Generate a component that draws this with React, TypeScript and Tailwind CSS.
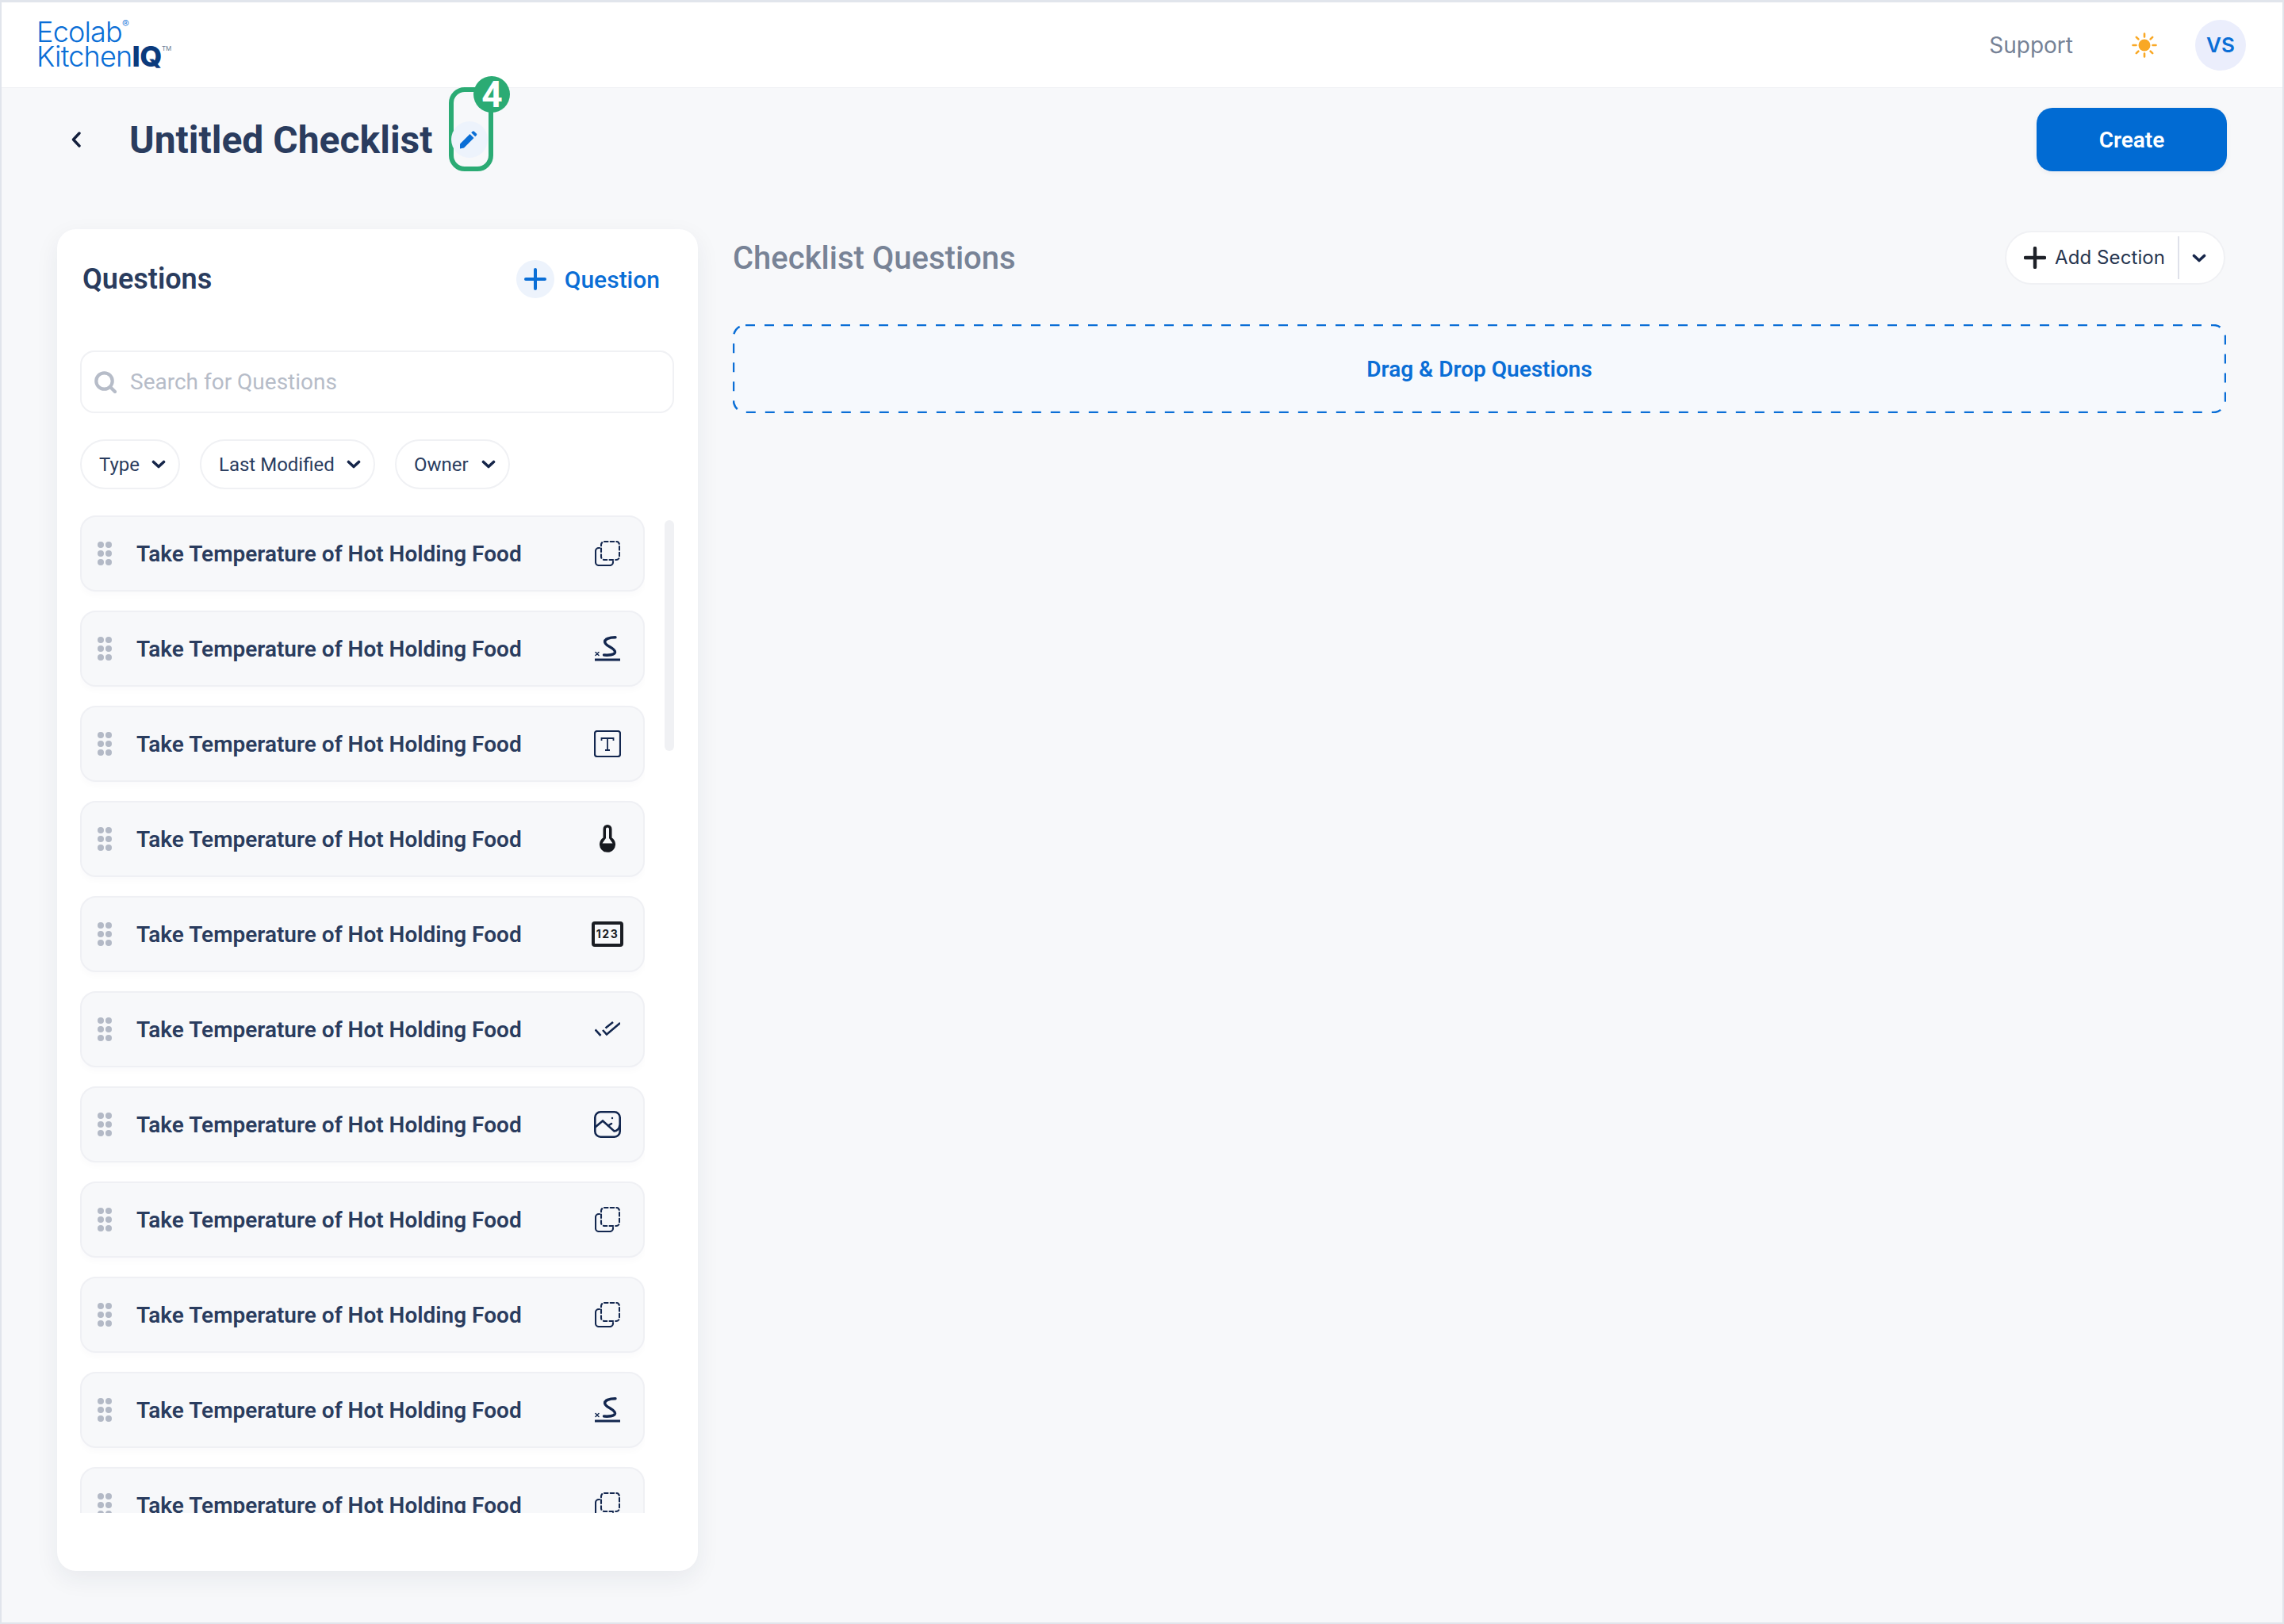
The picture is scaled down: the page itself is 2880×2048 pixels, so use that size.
import React from "react";

const Chevron = ({ className = "" }: { className?: string }) => (
  <svg viewBox="0 0 18 11" className={className} fill="none" stroke="#16264a" strokeWidth="3.6" strokeLinecap="round" strokeLinejoin="round">
    <path d="M2.5 2.5l6.5 6 6.5-6" />
  </svg>
);

const CopyDashed = () => (
  <svg viewBox="0 0 32 32" className="w-[32px] h-[32px]" fill="none" stroke="#13274f" strokeWidth="2.1" strokeLinecap="round">
    <rect x="8" y="1" width="23" height="23" rx="4" strokeDasharray="4.5 3.2" />
    <path d="M6 9H5a4 4 0 0 0-4 4v14a4 4 0 0 0 4 4h14a4 4 0 0 0 4-4v-1" />
  </svg>
);

const Signature = () => (
  <svg viewBox="0 0 32 32" className="w-[32px] h-[32px]" fill="none" stroke="#13274f" strokeLinecap="round">
    <path d="M26 1.8C18 1.8 12 4 12.7 8C13.5 13 26 15 25.5 20.5C25 24 17 24.5 11.5 24" strokeWidth="3.4" />
    <path d="M1 20.5l4 4M5 20.5l-4 4" strokeWidth="1.5" />
    <path d="M0 30h32" strokeWidth="3" strokeLinecap="butt" />
  </svg>
);

const TextBox = () => (
  <svg viewBox="0 0 34 34" className="w-[34px] h-[34px]" fill="none" stroke="#13274f">
    <rect x="1" y="1" width="32" height="32" rx="3" strokeWidth="2.2" />
    <path d="M9.5 13v-3h15v3M17 10v15M14 25h6" strokeWidth="1.8" />
  </svg>
);

const Thermo = () => (
  <svg viewBox="0 0 20 36" className="w-[20px] h-[36px]">
    <path fill="#16191f" d="M4.5 5.5a5.5 5.5 0 0 1 11 0V16.5a10 10 0 1 1-11 0Z" />
    <path fill="#f7f8fa" d="M8 5.5a2 2 0 0 1 4 0V17l4.5 6.5h-13L8 17Z" />
  </svg>
);

const Numeric = () => (
  <div className="w-[40px] h-[32px] border-[4px] border-[#1a1d23] rounded-[4px] flex items-center justify-center text-[14px] leading-none font-bold tracking-[1.5px] text-[#1a1d23]">
    123
  </div>
);

const DoubleCheck = () => (
  <svg viewBox="0 0 32 20" className="w-[32px] h-[20px]" fill="none" stroke="#13274f" strokeWidth="2.6">
    <path d="M0.5 10.5l7 7.5M10 11l5 5.5L32 2M13.5 8.5L23 1" />
  </svg>
);

const ImageIcon = () => (
  <svg viewBox="0 0 34 34" className="w-[34px] h-[34px]" fill="none" stroke="#13274f" strokeWidth="2.6" strokeLinecap="round">
    <rect x="1.3" y="1.3" width="31.4" height="31.4" rx="7" />
    <path d="M1.5 20.5L11 12.5 25.5 25.5c3 0 6.5-3 6.8-7" />
    <path d="M18 18.5l4-2.5" />
    <circle cx="23" cy="9" r="1.2" fill="#13274f" stroke="none" />
  </svg>
);

const icons = [CopyDashed, Signature, TextBox, Thermo, Numeric, DoubleCheck, ImageIcon, CopyDashed, CopyDashed, Signature, CopyDashed];

const Handle = () => (
  <div className="grid grid-cols-2 gap-x-[2px] gap-y-[3px] w-[18px] shrink-0">
    {[0, 1, 2, 3, 4, 5].map((i) => (
      <span key={i} className="w-[8px] h-[8px] rounded-full bg-[#b3b9c6]" />
    ))}
  </div>
);

const Row = ({ Icon }: { Icon: React.FC }) => (
  <div className="h-[96px] shrink-0 flex items-center rounded-[20px] border-2 border-[#eff0f4] bg-[#f7f8fa] pl-[20px] shadow-[0_4px_10px_rgba(30,40,70,0.025)]">
    <Handle />
    <span className="ml-[31px] pt-[2px] text-[28px] font-semibold text-[#2a3c5e] whitespace-nowrap" style={{ fontFamily: "Roboto, sans-serif" }}>Take Temperature of Hot Holding Food</span>
    <div className="ml-auto w-[40px] mr-[25px] flex justify-center items-center">
      <Icon />
    </div>
  </div>
);

const Filter = ({ label, w }: { label: string; w: string }) => (
  <div className={`h-[63px] ${w} rounded-full border-2 border-[#f0f1f4] bg-white flex items-center justify-between pl-[22px] pr-[16px] text-[24px] text-[#2a3c5e]`} style={{ fontFamily: "Roboto, sans-serif" }}>
    <span>{label}</span>
    <Chevron className="w-[18px] h-[11px]" />
  </div>
);

export default function App() {
  return (
    <div className="w-[2880px] h-[2048px] bg-[#f7f8fa] border-x-2 border-t-[3px] border-b-2 border-[#e1e5ec] overflow-hidden flex flex-col" style={{ fontFamily: "Inter, sans-serif" }}>
      <header className="h-[107px] shrink-0 bg-white shadow-[0_1px_0_#f0f1f4] flex items-center pl-[44px] pr-[46px]">
        <div className="text-[#0a6ed6] font-light tracking-[-0.8px] text-[36px] leading-[31px] mt-[-2px]">
          <div>
            Ecolab<sup className="text-[13px] align-top leading-none relative top-[-1px]">®</sup>
          </div>
          <div className="flex items-start">
            Kitchen<span className="font-extrabold text-[#0b3a7c] tracking-[-0.5px]">IQ</span>
            <span className="text-[8px] font-normal leading-none tracking-normal text-[#6b7a92] mt-[1px]">TM</span>
          </div>
        </div>
        <span className="ml-auto text-[28px] text-[#768296]">Support</span>
        <svg viewBox="0 0 32 32" className="ml-[74px] w-[32px] h-[32px]" fill="#f9a825" stroke="#f9a825" strokeWidth="2.6" strokeLinecap="round">
          <circle cx="16" cy="16" r="7.5" stroke="none" />
          <path d="M16 1.5v4M16 26.5v4M1.5 16h4M26.5 16h4M5.8 5.8l2.6 2.6M23.6 23.6l2.6 2.6M5.8 26.2l2.6-2.6M23.6 8.4l2.6-2.6" />
        </svg>
        <div className="ml-[48px] w-[64px] h-[64px] rounded-full bg-[#ebeefc] flex items-center justify-center text-[26px] font-semibold text-[#0a6ed6]">VS</div>
      </header>

      <div className="h-[179px] shrink-0 flex items-start pt-[26px] pl-[88px] pr-[70px]">
        <div className="h-[80px] flex items-center">
          <svg viewBox="0 0 12 20" className="w-[12px] h-[20px]" fill="none" stroke="#131f3c" strokeWidth="3.4" strokeLinecap="round" strokeLinejoin="round">
            <path d="M10 2L2.5 10l7.5 8" />
          </svg>
          <h1 className="ml-[61px] pt-[2px] text-[48px] font-bold text-[#2a3c5e] whitespace-nowrap" style={{ fontFamily: "Roboto, sans-serif" }}>Untitled Checklist</h1>
          <div className="relative ml-[21px] w-[56px] h-[106px] mt-[-26px] border-[6px] border-[#2bab74] rounded-[20px] flex items-start pt-[37px]">
            <div className="ml-[-3px] w-[46px] h-[46px] shrink-0 rounded-full bg-[#edf3fc] flex items-center justify-center">
              <svg viewBox="0 0 24 24" className="w-[24px] h-[24px] mr-[2px]" fill="#0a6ed6">
                <path d="M1 17.5L13.5 5l5 5L6 22.5 1 23.5Z" />
                <path d="M15.2 3.3l1.6-1.6a1.5 1.5 0 0 1 2.1 0l2.9 2.9a1.5 1.5 0 0 1 0 2.1l-1.6 1.6Z" />
              </svg>
            </div>
            <div className="absolute top-[-20px] left-[25px] w-[46px] h-[46px] rounded-full bg-[#2bab74] flex items-center justify-center text-white text-[46px] font-bold leading-none" style={{ fontFamily: "Roboto, sans-serif" }}>4</div>
          </div>
        </div>
        <button className="ml-auto pt-[2px] w-[240px] h-[80px] rounded-[20px] bg-[#016bd3] text-white text-[28px] font-semibold shadow-[0_2px_6px_rgba(30,40,70,0.06)]" style={{ fontFamily: "Roboto, sans-serif" }}>Create</button>
      </div>

      <main className="flex-1 flex items-start pl-[70px] pr-[71px]">
        <section className="w-[808px] h-[1692px] shrink-0 bg-white rounded-[24px] shadow-[0_10px_30px_rgba(30,40,70,0.07)] pt-[39px] pl-[29px] pr-[30px]">
          <div className="h-[48px] flex items-center">
            <h2 className="ml-[3px] text-[36px] font-semibold text-[#2a3c5e]" style={{ fontFamily: "Roboto, sans-serif" }}>Questions</h2>
            <div className="ml-auto w-[48px] h-[48px] rounded-full bg-[#edf3fc] flex items-center justify-center">
              <svg viewBox="0 0 28 28" className="w-[28px] h-[28px]" fill="none" stroke="#0a6ed6" strokeWidth="4" strokeLinecap="round">
                <path d="M14 2v24M2 14h24" />
              </svg>
            </div>
            <span className="ml-[13px] mr-[18px] text-[30px] font-medium text-[#0a6ed6]" style={{ fontFamily: "Roboto, sans-serif" }}>Question</span>
          </div>

          <div className="mt-[66px] h-[79px] rounded-[18px] border-2 border-[#f0f1f4] flex items-center pl-[16px]">
            <svg viewBox="0 0 28 28" className="w-[28px] h-[28px]" fill="none" stroke="#b6bcc8" strokeWidth="4.2" strokeLinecap="round">
              <circle cx="12.5" cy="12.5" r="10.2" />
              <path d="M20.5 20.5L26 26" />
            </svg>
            <span className="ml-[17px] pt-[1px] text-[28px] text-[#b6bcc8]" style={{ fontFamily: "Roboto, sans-serif" }}>Search for Questions</span>
          </div>

          <div className="mt-[33px] flex gap-[25px]">
            <Filter label="Type" w="w-[126px]" />
            <Filter label="Last Modified" w="w-[221px]" />
            <Filter label="Owner" w="w-[145px]" />
          </div>

          <div className="mt-[33px] h-[1258px] flex">
            <div className="w-[712px] h-full overflow-hidden flex flex-col gap-[24px]">
              {icons.map((I, i) => (
                <Row key={i} Icon={I} />
              ))}
            </div>
            <div className="ml-[25px] mt-[6px] w-[12px] h-[291px] rounded-full bg-[#f0f1f4]" />
          </div>
        </section>

        <section className="ml-[44px] flex-1 pt-[2px]">
          <div className="h-[68px] flex items-center">
            <h2 className="pt-[2px] text-[40px] font-medium text-[#788396]" style={{ fontFamily: "Roboto, sans-serif" }}>Checklist Questions</h2>
            <div className="ml-auto mr-[1px] w-[278px] h-[68px] rounded-full bg-white border-2 border-[#f0f1f4] flex items-center pl-[22px]">
              <svg viewBox="0 0 28 28" className="w-[28px] h-[28px] shrink-0" fill="none" stroke="#1e2128" strokeWidth="4.4" strokeLinecap="round">
                <path d="M14 2v24M2 14h24" />
              </svg>
              <span className="ml-[11px] w-[138px] text-[24px] text-[#283650] tracking-[0.1px] whitespace-nowrap">Add Section</span>
              <span className="ml-[17px] w-[2px] h-[54px] bg-[#dfe1ea] shrink-0" />
              <Chevron className="ml-[16px] w-[18px] h-[11px] shrink-0" />
            </div>
          </div>

          <div className="relative mt-[50px] h-[112px] bg-[#f6f9fd] rounded-[16px] flex items-center justify-center">
            <svg className="absolute inset-0 w-full h-full" fill="none">
              <rect x="1" y="1" width="1881" height="110" rx="15" stroke="#0a6ed6" strokeWidth="2.5" strokeDasharray="12 12" />
            </svg>
            <span className="pt-[2px] text-[28px] font-semibold text-[#0a6ed6]" style={{ fontFamily: "Roboto, sans-serif" }}>Drag &amp; Drop Questions</span>
          </div>
        </section>
      </main>
    </div>
  );
}
